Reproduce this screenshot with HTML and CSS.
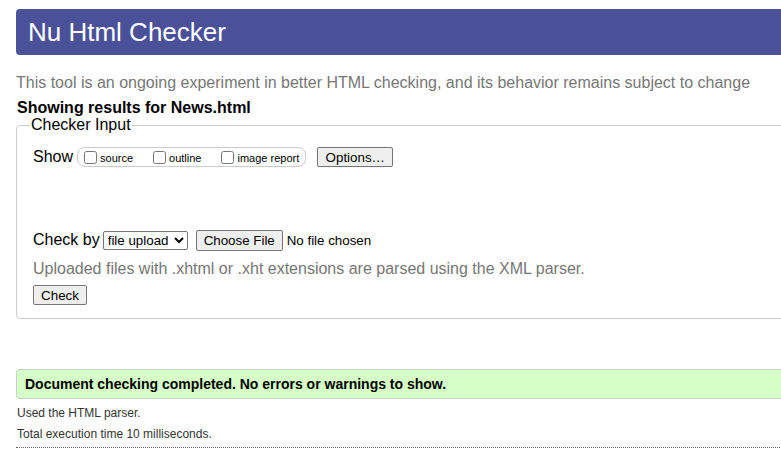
FILE: index.html
```html
<!DOCTYPE html>
<html>
<head>
<meta charset="utf-8">
<title>Nu Html Checker</title>
<link rel="stylesheet" href="styles.css">
</head>
<body>
<div class="page">
  <h1 class="title">Nu Html Checker</h1>
  <p class="intro">This tool is an ongoing experiment in better HTML checking, and its behavior remains subject to change</p>
  <p class="showing">Showing results for News.html</p>
  <fieldset class="input">
    <legend>Checker Input</legend>
    <div class="row show-row">
      <span class="label">Show</span>
      <span class="opts">
        <label><input type="checkbox"><span>source</span></label>
        <label><input type="checkbox"><span>outline</span></label>
        <label><input type="checkbox"><span>image report</span></label>
      </span>
      <button class="btn">Options…</button>
    </div>
    <div class="row by-row">
      <span class="label">Check by</span>
      <select class="sel"><option>file upload</option></select>
      <span class="file"><button class="btn">Choose File</button><span class="nofile">No file chosen</span></span>
    </div>
    <p class="hint">Uploaded files with .xhtml or .xht extensions are parsed using the XML parser.</p>
    <button class="btn check">Check</button>
  </fieldset>
  <p class="success">Document checking completed. No errors or warnings to show.</p>
  <p class="details first">Used the HTML parser.</p>
  <p class="details">Total execution time 10 milliseconds.</p>
  <hr class="dots">
</div>
</body>
</html>
```
FILE: styles.css
```css
html, body {
  margin: 0;
  padding: 0;
  overflow: hidden;
  background: #fff;
}
body {
  font-family: "Liberation Sans", Arial, sans-serif;
  color: #000;
}
.page {
  width: 900px;
  padding: 9px 0 0 16px;
}
.title {
  margin: 0;
  height: 46px;
  box-sizing: border-box;
  background: #4a5199;
  color: #fff;
  font-weight: normal;
  font-size: 26px;
  line-height: 46px;
  padding-left: 12px;
  border-radius: 4px;
}
.intro {
  margin: 19px 0 0 0;
  font-size: 16px;
  line-height: 18px;
  color: #777;
}
.showing {
  margin: 7px 0 0 1px;
  font-size: 16px;
  line-height: 18px;
  font-weight: bold;
}
.input {
  margin: 0;
  padding: 14px 16px 12px 16px;
  border: 1px solid #ccc;
  border-radius: 4px;
  height: 202px;
  box-sizing: border-box;
}
.input legend {
  font-size: 16px;
  padding: 0 1px;
  margin-left: -3px;
  line-height: 16px;
}
.row {
  display: flex;
  align-items: center;
}
.label {
  font-size: 16px;
}
.show-row {
  height: 20px;
}
.opts {
  display: inline-flex;
  align-items: center;
  margin-left: 4px;
  border: 1px solid #ccc;
  border-radius: 8px;
  height: 18px;
  padding: 0 6px 0 2px;
  font-size: 11px;
}
.opts label {
  display: inline-flex;
  align-items: center;
  margin-right: 16px;
}
.opts label span {
  position: relative;
  top: 1px;
}
.opts label:last-child {
  margin-right: 0;
}
.opts input {
  margin: 0 3px 0 4px;
  width: 13px;
  height: 13px;
}
.btn {
  font-family: "Liberation Sans", Arial, sans-serif;
  font-size: 13.33px;
  padding: 1px 6px;
  height: 20px;
  border: 1px solid #767676;
  border-radius: 2px;
  background: #efefef;
  color: #000;
}
.show-row .btn {
  margin-left: 11px;
  width: 76px;
}
.by-row {
  margin-top: 63px;
  height: 20px;
}
.sel {
  margin-left: 3px;
  font-family: "Liberation Sans", Arial, sans-serif;
  font-size: 13.33px;
  height: 19px;
  width: 85px;
  padding: 0;
  border: 1px solid #767676;
  border-radius: 2px;
  background: #fff;
}
.file {
  display: inline-flex;
  align-items: center;
  margin-left: 8px;
  font-size: 13.33px;
}
.file .btn {
  height: 21px;
  width: 87px;
}
.nofile {
  margin-left: 4px;
}
.hint {
  margin: 10px 0 0 0;
  font-size: 16px;
  line-height: 18px;
  color: #777;
}
.check {
  margin-top: 7px;
  width: 54px;
}
.success {
  margin: 50px 0 0 0;
  height: 30px;
  box-sizing: border-box;
  background: #d5ffc7;
  border: 1px solid #ccc;
  border-radius: 3px;
  padding-left: 8px;
  font-size: 14px;
  font-weight: bold;
  line-height: 28px;
}
.details {
  margin: 0 0 0 1px;
  font-size: 12px;
  line-height: 21px;
  color: #333;
}
.details.first {
  margin-top: 4px;
}
.dots {
  margin: 2px 0 0 0;
  border: 0;
  border-top: 1px dotted #666;
  height: 0;
}
```
